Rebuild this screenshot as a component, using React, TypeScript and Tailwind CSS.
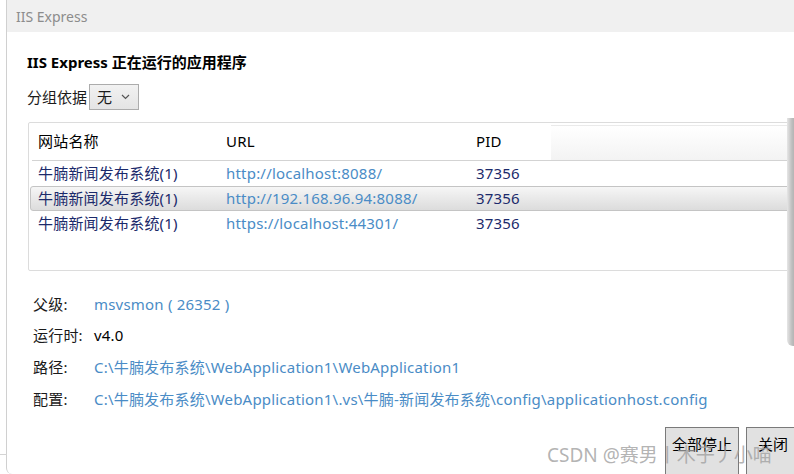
import React from "react";

const font = { fontFamily: '"Noto Sans", "Noto Sans CJK SC", sans-serif' };

interface Site {
  name: string;
  url: string;
  pid: string;
  selected?: boolean;
}

const sites: Site[] = [
  { name: "牛腩新闻发布系统(1)", url: "http://localhost:8088/", pid: "37356" },
  { name: "牛腩新闻发布系统(1)", url: "http://192.168.96.94:8088/", pid: "37356", selected: true },
  { name: "牛腩新闻发布系统(1)", url: "https://localhost:44301/", pid: "37356" },
];

const details = [
  { label: "父级:", value: "msvsmon ( 26352 )", link: true },
  { label: "运行时:", value: "v4.0", link: false },
  { label: "路径:", value: "C:\\牛腩发布系统\\WebApplication1\\WebApplication1", link: true },
  {
    label: "配置:",
    value: "C:\\牛腩发布系统\\WebApplication1\\.vs\\牛腩-新闻发布系统\\config\\applicationhost.config",
    link: true,
  },
];

const App: React.FC = () => {
  return (
    <div className="relative w-[794px] h-[474px] overflow-hidden bg-white" style={font}>
      <div className="absolute left-0 top-[454px] w-[7px] h-px bg-[#d4d4d4]" />
      <div className="ml-[6px] h-[474px] border-l border-[#d0d0d0] rounded-bl-[6px] flex flex-col">
        {/* title bar */}
        <div className="h-[32px] bg-[#f0f0f0] flex items-center pl-[9px] text-[14px] text-[#8c8c8c]">
          IIS Express
        </div>

        <div className="pl-[20px] flex flex-col">
          <div className="mt-[18px] h-[24px] flex items-center text-[15px] font-bold text-black">
            IIS Express 正在运行的应用程序
          </div>

          <div className="mt-[10px] flex items-center h-[26px] text-[15px] text-[#1a1a1a]">
            <span>分组依据</span>
            <div className="ml-[2px] w-[50px] h-[26px] border border-[#acacac] bg-gradient-to-b from-[#f2f2f2] to-[#e4e4e4] flex items-center pl-[7px] pr-[8px] justify-between">
              <span className="text-[15px]">无</span>
              <svg width="9" height="6" viewBox="0 0 9 6">
                <path d="M1 1 L4.5 4.5 L8 1" fill="none" stroke="#555" strokeWidth="1.2" />
              </svg>
            </div>
          </div>

          {/* list */}
          <div className="mt-[12px] ml-px w-[800px] h-[149px] border border-[#dcdcdc] rounded-[2px] flex flex-col text-[15px] tracking-[0.2px]">
            <div className="relative h-[37px] flex items-center">
              <div className="absolute left-[522px] top-[2px] right-0 bottom-0 bg-gradient-to-b from-white to-[#f3f3f3] border-t border-[#eaeaea]" />
              <span className="relative w-[197px] pl-[9px] text-black">网站名称</span>
              <span className="relative w-[250px] text-black">URL</span>
              <span className="relative text-black">PID</span>
            </div>
            <div className="ml-[3px] h-px bg-[#d3d3d3]" />
            {sites.map((s, i) => (
              <div
                key={i}
                className={
                  s.selected
                    ? "ml-px h-[25px] flex items-center border border-[#c4c4c4] rounded-l-[3px] bg-gradient-to-b from-[#f6f6f6] to-[#dcdcdc]"
                    : "ml-px h-[25px] flex items-center border border-transparent"
                }
              >
                <span className="w-[195px] pl-[7px] text-[#1b2a6b]">{s.name}</span>
                <span className="w-[250px] text-[#4a8cc6]">{s.url}</span>
                <span className="text-[#1b2a6b]">{s.pid}</span>
              </div>
            ))}
          </div>

          {/* details */}
          <div className="mt-[17px] pl-[6px] flex flex-col text-[15px] tracking-[0.2px]">
            {details.map((d) => (
              <div key={d.label} className="h-[31.7px] flex items-center">
                <span className="w-[61px] text-[#1a1a1a]">{d.label}</span>
                <span className={d.link ? "text-[#4a8cc6] whitespace-nowrap" : "text-black"}>{d.value}</span>
              </div>
            ))}
          </div>
        </div>
      </div>

      {/* right edge shadow */}
      <div className="absolute left-[787px] top-[118px] w-[10px] h-[228px] rounded-bl-[6px] bg-gradient-to-r from-[#e6e6e6] via-[#bdbdbd] to-[#a8a8a8]" />

      {/* buttons */}
      <div className="absolute left-[665px] top-[427px] flex gap-[7px] text-[15px]">
        <button className="w-[74px] h-[52px] pb-[18px] bg-[#e1e1e1] border border-[#7a7a7a] text-black flex items-center justify-center">
          全部停止
        </button>
        <button className="w-[60px] h-[52px] pb-[18px] pr-[6px] bg-[#e1e1e1] border border-[#7a7a7a] text-black flex items-center justify-center">
          关闭
        </button>
      </div>

      {/* watermark */}
      <div className="absolute left-[547px] top-[441px] text-[19px] text-[#a0a0a0]/80 whitespace-nowrap">
        CSDN @赛男丨木子丿小喵
      </div>
    </div>
  );
};

export default App;
